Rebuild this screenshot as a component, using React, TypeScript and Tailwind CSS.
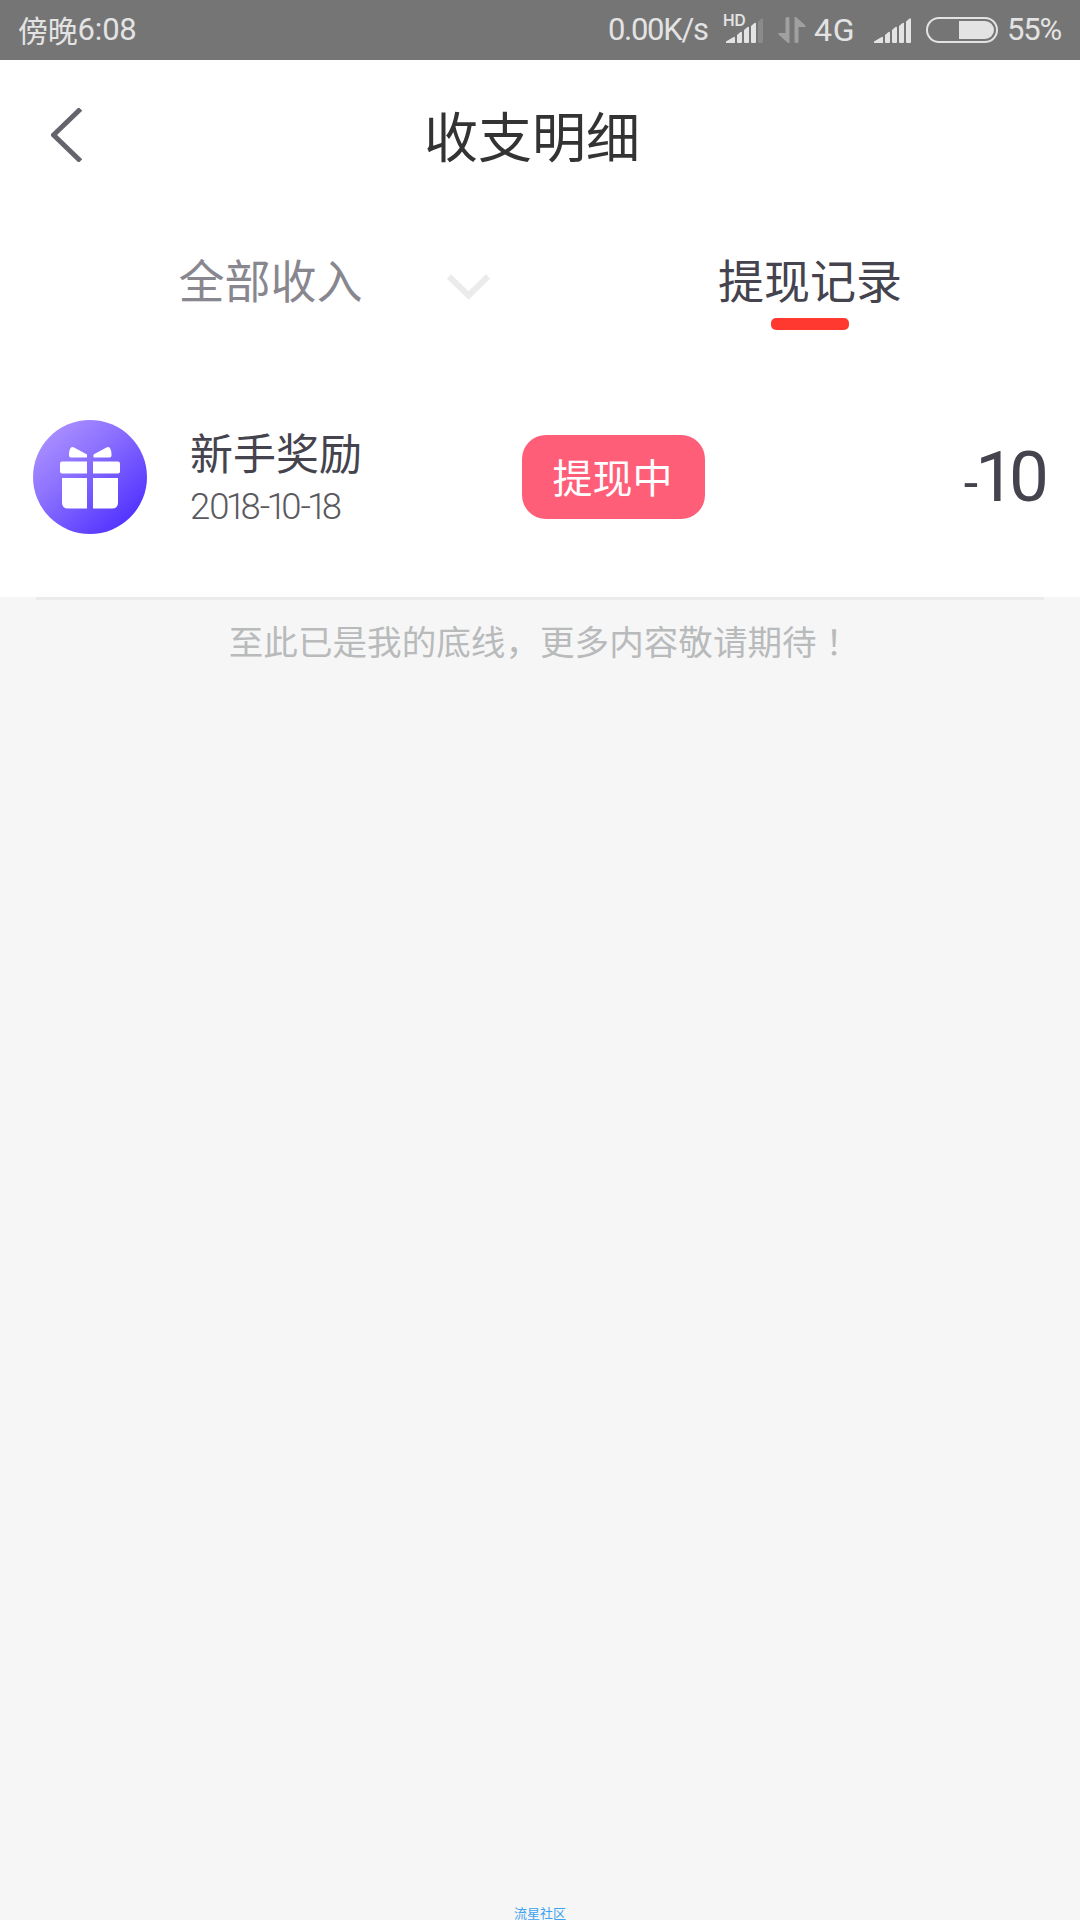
import React from 'react';

const CJK = "font-['Noto_Sans_CJK_SC',sans-serif]";

function SignalBars({ faded = false }: { faded?: boolean }) {
  return (
    <svg width="37" height="25" viewBox="0 0 37 25" fill="#e3e3e3" className="block">
      <path d="M0 25 V23.6 L7.6 19 Q9 18.4 9 20 V25 Z" />
      <path d="M11 24 V17 L14.5 14 Q16 13.2 16 15 V24 Q16 25 15 25 H12 Q11 25 11 24 Z" />
      <path d="M18 24 V12 L21.5 9 Q23 8.2 23 10 V24 Q23 25 22 25 H19 Q18 25 18 24 Z" />
      <path d="M25 24 V8 L28.5 5 Q30 4.2 30 6 V24 Q30 25 29 25 H26 Q25 25 25 24 Z" />
      <path d="M32 24 V3.5 L35.5 .4 Q37 -.2 37 1.5 V24 Q37 25 36 25 H33 Q32 25 32 24 Z" opacity={faded ? 0.2 : 1} />
    </svg>
  );
}

function StatusBar() {
  return (
    <header className="flex h-[60px] items-center bg-[#757575] pl-[18px] text-[#e3e3e3] whitespace-nowrap">
      <span className="flex w-[590px] items-center">
        <span className="font-['Noto_Sans_CJK_SC',sans-serif] text-[30px] leading-[60px] -tracking-[0.2px] -mt-[3px]">傍晚</span>
        <span className="font-[Roboto,sans-serif] text-[31px] leading-[62px] -tracking-[0.2px]">6:08</span>
      </span>
      <span className="w-[115px] font-[Roboto,sans-serif] text-[31px] leading-[62px] -tracking-[1.3px]">0.00K/s</span>
      <span className="flex h-[60px] w-[55px] items-center">
        <span className="w-0 self-start pt-[14px] font-[Inter,sans-serif] text-[15.5px] font-semibold leading-[14px]">HD</span>
        <span className="mt-[1px] ml-[3px]"><SignalBars faded /></span>
      </span>
      <svg width="28" height="26" viewBox="0 0 28 26" fill="#a0a0a0" className="block w-[35px] -ml-[3px]">
        <path d="M7 1.5 Q7 0 8.5 0 H9.5 Q11 0 11 1.5 V26 H9.5 L0 17.5 V16 H7 Z" />
        <path d="M16 0 H17.5 L27 8.5 V10 H20 V24.5 Q20 26 18.5 26 H17.5 Q16 26 16 24.5 Z" />
      </svg>
      <span className="ml-[4px] w-[60px] font-[Roboto,sans-serif] text-[32px] leading-[60px] tracking-[0.8px]">4G</span>
      <span className="mt-[1px]"><SignalBars /></span>
      <span className="ml-[15px] flex h-[26px] w-[72px] items-center justify-end rounded-full border-2 border-[#e3e3e3] pr-0.5">
        <span className="h-[18px] w-[35px] rounded-r-[9px] bg-[#e3e3e3]" />
      </span>
      <span className="ml-[9px] font-[Roboto,sans-serif] text-[31px] leading-[60px] -tracking-[1.2px]">55%</span>
    </header>
  );
}

function GiftBadge() {
  return (
    <svg width="114" height="114" viewBox="0 0 114 114" className="block shrink-0">
      <defs>
        <linearGradient id="badge" x1="0.15" y1="0.12" x2="0.85" y2="0.88">
          <stop offset="0" stopColor="#a78dff" />
          <stop offset="0.35" stopColor="#8d72ff" />
          <stop offset="1" stopColor="#5233ff" />
        </linearGradient>
      </defs>
      <circle cx="57" cy="57" r="57" fill="url(#badge)" />
      <g fill="#fff">
        <path d="M38 27.5 Q39.5 26.5 41.5 27.8 L54 34.5 V37.5 H38 Q36 37.5 36 35.5 Q35.8 30 38 27.5 Z" />
        <path d="M76.500 27.5 Q75 26.500 73 27.8 L60.500 34.500 V37.500 H76.500 Q78.500 37.500 78.500 35.500 Q78.700 30 76.500 27.500 Z" />
        <path d="M29 41.500 H54 V53.500 H29 Q27 53.500 27 51.500 V43.500 Q27 41.500 29 41.500 Z" />
        <path d="M60 41.500 H85 Q87 41.500 87 43.500 V51.500 Q87 53.500 85 53.500 H60 Z" />
        <path d="M29 58 H54 V88.500 H35 Q29 88.500 29 82.500 Z" />
        <path d="M60 58 H85 V82.500 Q85 88.500 79 88.500 H60 Z" />
      </g>
    </svg>
  );
}

function DateText({ value }: { value: string }) {
  const chars = value.split('');
  const tracking = (i: number) => {
    if (chars[i] === '1') return '-tracking-[5.5px]';
    if (chars[i + 1] === '1') return '-tracking-[3.9px]';
    return '-tracking-[0.9px]';
  };
  return (
    <div className="mt-[5px] font-[Roboto,sans-serif] text-[36.5px] font-light leading-[44px] text-[#5a5960]">
      {chars.map((c, i) => (
        <span key={i} className={tracking(i)}>{c}</span>
      ))}
    </div>
  );
}

export default function App() {
  return (
    <div className={`flex h-[1920px] w-[1080px] flex-col overflow-hidden bg-[#f6f6f6] ${CJK}`}>
      <StatusBar />

      <section className="h-[537px] bg-white">
        <nav className="flex h-[146px] items-center pl-[51px]">
          <svg width="31" height="54" viewBox="0 0 31 54" className="mt-[4px] block" fill="none" stroke="#65646d" strokeWidth="5">
            <path d="M29.500 1 L2.500 27 L29.500 53" />
          </svg>
          <h1 className="ml-[342px] text-[54px] font-normal leading-[150px] pt-1 text-[#333333]">收支明细</h1>
        </nav>

        <div className="grid h-[142px] grid-cols-2 text-[46px]">
          <div className="flex justify-center">
            <div className="ml-[128px] flex items-center text-[#88878f]">
              <span className="leading-[144px]">全部收入</span>
              <svg width="43" height="26" viewBox="0 0 43 26" className="ml-[84px] mt-[18px] block" fill="none" stroke="#ebebeb" strokeWidth="6">
                <path d="M2 2.500 L21.500 21.500 L41 2.500" />
              </svg>
            </div>
          </div>
          <div className="flex flex-col items-center text-[#44434e]">
            <span className="h-[112px] leading-[144px]">提现记录</span>
            <span className="h-3 w-[78px] rounded-[5px] bg-[#ff3930]" />
          </div>
        </div>

        <div className="flex h-[257px] items-start pl-[33px] pr-[31px] pt-[72px]">
          <GiftBadge />
          <div className="ml-[43px] w-[332px]">
            <div className="h-[60px] text-[43px] leading-[62px] text-[#44434e]">新手奖励</div>
            <DateText value="2018-10-18" />
          </div>
          <div className="mt-[15px] h-[84px] w-[183px] rounded-[24px] bg-[#ff5e79] text-center text-[40px] leading-[82px] -indent-[2px] text-white">提现中</div>
          <div className="ml-auto font-[Roboto,sans-serif] text-[71px] leading-[114px] text-[#44434e]">
            <span className="text-[52px] -tracking-[3px]">-</span>
            <span className="-tracking-[6px]">1</span>
            <span>0</span>
          </div>
        </div>
      </section>

      <div className="mx-9 h-[3px] bg-[#ebebeb]" />
      <p className="text-center text-[34.6px] leading-[80px] text-[#b8babb] whitespace-nowrap">
        至此已是我的底线，更多内容敬请期待<span className="font-['Noto_Sans_CJK_TC',sans-serif]">！</span>
      </p>
      <footer className="mt-auto h-[15px] text-center text-[13px] leading-[15px] text-[#3ea2ee]">流星社区</footer>
    </div>
  );
}
